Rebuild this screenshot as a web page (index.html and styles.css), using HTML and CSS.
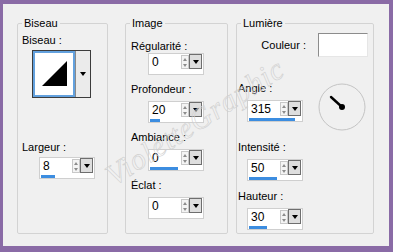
FILE: index.html
```html
<!DOCTYPE html>
<html lang="fr">
<head>
  <meta charset="UTF-8" />
  <title>Biseau intérieur</title>
  <link rel="stylesheet" href="styles.css">
</head>
<body>
  <div class="dialog">

    <!-- Biseau -->
    <fieldset class="group group-bevel">
      <legend>Biseau</legend>
      <div class="label label-bevel">Biseau :</div>
      <div class="preview">
        <div class="preview-box">
          <svg width="38" height="42" viewBox="0 0 38 42">
            <polygon points="7,33 32,33 32,8" fill="#000" />
          </svg>
        </div>
        <div class="preview-drop"><i class="caret"></i></div>
      </div>
      <div class="label label-width">Largeur :</div>
      <div class="spin spin-bevel">
        <div class="spin-row">
          <span class="spin-value">8</span>
          <span class="spin-arrows"><i class="arrow-up"></i><i class="arrow-down"></i></span>
          <span class="drop"><i class="caret"></i></span>
        </div>
        <div class="spin-track"><i class="spin-fill" style="width:14px"></i></div>
      </div>
    </fieldset>

    <!-- Image -->
    <fieldset class="group group-image">
      <legend>Image</legend>

      <div class="field field-first">
        <div class="label">Régularité :</div>
        <div class="spin">
          <div class="spin-row">
            <span class="spin-value">0</span>
            <span class="spin-arrows"><i class="arrow-up"></i><i class="arrow-down"></i></span>
            <span class="drop"><i class="caret"></i></span>
          </div>
          <div class="spin-track"><i class="spin-fill" style="width:0px"></i></div>
        </div>
      </div>

      <div class="field">
        <div class="label">Profondeur :</div>
        <div class="spin">
          <div class="spin-row">
            <span class="spin-value">20</span>
            <span class="spin-arrows"><i class="arrow-up"></i><i class="arrow-down"></i></span>
            <span class="drop"><i class="caret"></i></span>
          </div>
          <div class="spin-track"><i class="spin-fill" style="width:10px"></i></div>
        </div>
      </div>

      <div class="field">
        <div class="label">Ambiance :</div>
        <div class="spin">
          <div class="spin-row">
            <span class="spin-value">0</span>
            <span class="spin-arrows"><i class="arrow-up"></i><i class="arrow-down"></i></span>
            <span class="drop"><i class="caret"></i></span>
          </div>
          <div class="spin-track"><i class="spin-fill" style="width:28px"></i></div>
        </div>
      </div>

      <div class="field">
        <div class="label">Éclat :</div>
        <div class="spin">
          <div class="spin-row">
            <span class="spin-value">0</span>
            <span class="spin-arrows"><i class="arrow-up"></i><i class="arrow-down"></i></span>
            <span class="drop"><i class="caret"></i></span>
          </div>
          <div class="spin-track"><i class="spin-fill" style="width:0px"></i></div>
        </div>
      </div>
    </fieldset>

    <!-- Lumière -->
    <fieldset class="group group-light">
      <legend>Lumière</legend>

      <div class="color-row">
        <div class="label">Couleur :</div>
        <div class="swatch"></div>
      </div>

      <div class="angle-row">
        <div class="field">
          <div class="label">Angle :</div>
          <div class="spin">
            <div class="spin-row">
              <span class="spin-value">315</span>
              <span class="spin-arrows"><i class="arrow-up"></i><i class="arrow-down"></i></span>
              <span class="drop"><i class="caret"></i></span>
            </div>
            <div class="spin-track"><i class="spin-fill" style="width:46px"></i></div>
          </div>
        </div>
        <svg class="dial" width="50" height="50" viewBox="0 0 50 50">
          <circle cx="25" cy="25" r="23" fill="none" stroke="#c4c4c4" stroke-width="1" />
          <line x1="14" y1="15" x2="25" y2="25" stroke="#000" stroke-width="2.4" stroke-linecap="round" />
          <circle cx="25" cy="25" r="3" fill="#000" />
        </svg>
      </div>

      <div class="field">
        <div class="label">Intensité :</div>
        <div class="spin">
          <div class="spin-row">
            <span class="spin-value">50</span>
            <span class="spin-arrows"><i class="arrow-up"></i><i class="arrow-down"></i></span>
            <span class="drop"><i class="caret"></i></span>
          </div>
          <div class="spin-track"><i class="spin-fill" style="width:28px"></i></div>
        </div>
      </div>

      <div class="field">
        <div class="label">Hauteur :</div>
        <div class="spin">
          <div class="spin-row">
            <span class="spin-value">30</span>
            <span class="spin-arrows"><i class="arrow-up"></i><i class="arrow-down"></i></span>
            <span class="drop"><i class="caret"></i></span>
          </div>
          <div class="spin-track"><i class="spin-fill" style="width:18px"></i></div>
        </div>
      </div>
    </fieldset>

    <div class="watermark">VioletteGraphic</div>
  </div>
</body>
</html>
```

FILE: styles.css
```css
* {
  margin: 0;
  padding: 0;
  box-sizing: border-box;
}
body {
  font-family: "Liberation Sans", Arial, sans-serif;
  font-size: 11px;
  color: #000;
  background: #8a6ba6;
}
.dialog {
  position: relative;
  display: flex;
  width: 393px;
  height: 252px;
  padding: 13px 0 0 14px;
  background: #f0f0f0;
  border: solid #8a6ba6;
  border-width: 4px 4px 6px 3px;
  overflow: hidden;
}

/* group boxes */
.group {
  height: 217px;
  min-width: 0;
  border: 1px solid #d3d3d3;
  border-radius: 2px;
}
.group legend {
  margin-left: 4px;
  padding: 0 2px;
  line-height: 13px;
}
.group-bevel {
  width: 91px;
}
.group-image {
  width: 103px;
  margin-left: 17px;
}
.group-light {
  width: 138px;
  margin-left: 8px;
}
.label {
  line-height: 14px;
  white-space: nowrap;
}

/* Biseau */
.label-bevel {
  margin: 3px 0 0 4px;
}
.preview {
  display: flex;
  width: 59px;
  height: 48px;
  margin: 3px 0 0 14px;
  border: 1px solid #3c3c3c;
}
.preview-box {
  width: 42px;
  background: #fff;
  border: 2px solid #63a1de;
}
.preview-box svg {
  display: block;
}
.preview-drop {
  flex: 1;
  display: flex;
  align-items: center;
  justify-content: center;
  background: #ebebeb;
  border-left: 1px solid #8a8a8a;
}
.label-width {
  margin: 42px 0 0 4px;
}
.spin-bevel {
  margin: 3px 0 0 21px;
}

/* Image */
.group-image .field {
  margin: 7px 0 0 5px;
}
.group-image .spin {
  margin: 5px 0 0 17px;
}
.group-image .field-first {
  margin-top: 9px;
}
.group-image .field-first .spin {
  margin-top: 0;
}

/* spin control */
.spin {
  width: 56px;
  height: 22px;
  background: #fff;
  border: 1px solid #cfcfcf;
}
.spin-row {
  display: flex;
  height: 16px;
}
.spin-value {
  flex: 1;
  padding-left: 3px;
  line-height: 16px;
  font-size: 12px;
}
.spin-arrows {
  display: flex;
  flex-direction: column;
  justify-content: space-around;
  align-items: center;
  width: 8px;
  height: 14px;
  margin-top: 1px;
  border: 1px solid #c8c8c8;
  background: #f4f4f4;
}
.arrow-up {
  width: 0;
  height: 0;
  border-left: 2.5px solid transparent;
  border-right: 2.5px solid transparent;
  border-bottom: 3px solid #8c8c8c;
}
.arrow-down {
  width: 0;
  height: 0;
  border-left: 2.5px solid transparent;
  border-right: 2.5px solid transparent;
  border-top: 3px solid #8c8c8c;
}
.drop {
  display: flex;
  align-items: center;
  justify-content: center;
  width: 13px;
  height: 15px;
  margin-right: 1px;
  background: #dedede;
  border: 1px solid #6e6e6e;
}
.caret {
  width: 0;
  height: 0;
  border-left: 3.5px solid transparent;
  border-right: 3.5px solid transparent;
  border-top: 4px solid #000;
}
.spin-track {
  height: 3px;
  margin: 1px 0 0 1px;
}
.spin-fill {
  display: block;
  height: 3px;
  background: #3c8de0;
}

/* Lumière */
.color-row {
  display: flex;
  align-items: center;
  justify-content: flex-end;
  margin: 3px 5px 0 0;
}
.color-row .label {
  margin-right: 12px;
}
.swatch {
  width: 50px;
  height: 24px;
  background: #fff;
  border: 1px solid;
  border-color: #8c8c8c #e6e6e6 #e6e6e6 #8c8c8c;
}
.angle-row {
  display: flex;
  margin-top: 24px;
}
.dial {
  display: block;
  margin: 1px 6px 0 auto;
}
.group-light .field {
  margin: 8px 0 0 1px;
}
.group-light .angle-row .field {
  margin-top: 0;
}
.group-light .spin {
  margin: 5px 0 0 9px;
}

/* watermark */
.watermark {
  position: absolute;
  left: 192px;
  top: 118px;
  transform: translate(-50%, -50%) rotate(-33deg);
  font-family: "Liberation Serif", serif;
  font-style: italic;
  font-size: 30px;
  letter-spacing: 1px;
  color: rgba(255, 255, 255, 0.15);
  -webkit-text-stroke: 0.6px #cfcfcf;
  white-space: nowrap;
  pointer-events: none;
}
```
